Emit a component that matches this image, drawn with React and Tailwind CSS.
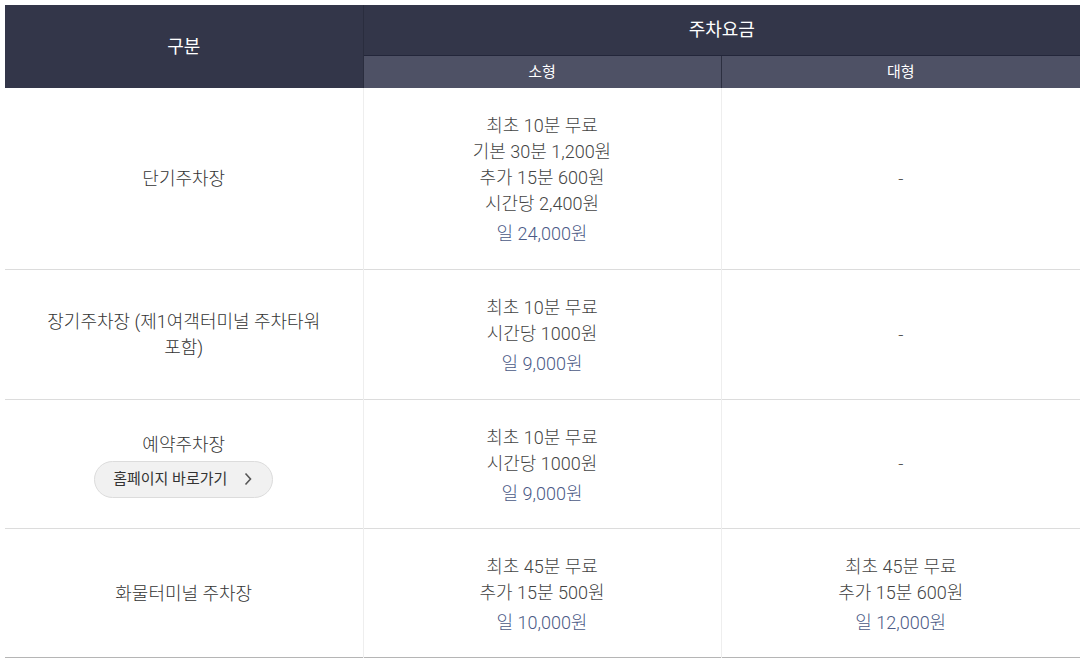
const rows = [
  {
    name: <>단기주차장</>,
    small: ['최초 10분 무료', '기본 30분 1,200원', '추가 15분 600원', '시간당 2,400원'],
    smallDay: '일 24,000원',
    h: 'h-[181px]',
  },
  {
    name: <>장기주차장 (제1여객터미널 주차타워<br />포함)</>,
    small: ['최초 10분 무료', '시간당 1000원'],
    smallDay: '일 9,000원',
    h: 'h-[130px]',
  },
  {
    name: <>예약주차장</>,
    button: true,
    small: ['최초 10분 무료', '시간당 1000원'],
    smallDay: '일 9,000원',
    h: 'h-[129px]',
  },
  {
    name: <>화물터미널 주차장</>,
    small: ['최초 45분 무료', '추가 15분 500원'],
    smallDay: '일 10,000원',
    large: ['최초 45분 무료', '추가 15분 600원'],
    largeDay: '일 12,000원',
    h: 'h-[129px]',
  },
];

const Fee = ({ lines, day }) => {
  if (!lines) return <span className="text-[#555]">-</span>;
  return (
    <div className="flex flex-col items-center pt-[4px]">
      {lines.map((l) => (
        <p key={l} className="leading-[26px] text-[#444]">{l}</p>
      ))}
      <p className="mt-[4px] leading-[26px] text-[#4b5a86]">{day}</p>
    </div>
  );
};

export default function App() {
  return (
    <div className="bg-white min-h-[665px] px-[5px] pt-[5px]" style={{ fontFamily: 'Roboto, "Noto Sans CJK KR", sans-serif' }}>
      <table className="w-[1075px] border-collapse table-fixed text-center text-[18px] font-light">
        <colgroup>
          <col className="w-[358px]" />
          <col className="w-[358px]" />
          <col className="w-[359px]" />
        </colgroup>
        <thead>
          <tr className="h-[50px]">
            <th rowSpan={2} className="bg-[#333649] text-white font-normal text-[18px] border-r border-[#2a2d3e]">구분</th>
            <th colSpan={2} className="bg-[#333649] text-white font-normal text-[18px] border-b border-[#23263a]">주차요금</th>
          </tr>
          <tr className="h-[33px]">
            <th className="bg-[#4e5165] text-white font-normal text-[15px] border-r border-[#2c2f40]">소형</th>
            <th className="bg-[#4e5165] text-white font-normal text-[15px]">대형</th>
          </tr>
        </thead>
        <tbody>
          {rows.map((r, i) => (
            <tr key={i} className={`${r.h} border-b ${i === rows.length - 1 ? 'border-[#b5b5b5]' : 'border-[#dcdcdc]'}`}>
              <td className="border-r border-[#eeeeee] text-[#333] leading-[26px] px-4">
                <div className="flex flex-col items-center pt-[2px]">
                  <span>{r.name}</span>
                  {r.button && (
                    <button className="mt-[3px] flex items-center gap-[16px] h-[37px] pl-[18px] pr-[19px] rounded-full bg-[#f1f1f1] border border-[#dcdcdc] text-[15px] font-normal text-[#333]">
                      홈페이지 바로가기
                      <svg width="10" height="14" viewBox="0 0 10 14" fill="none" stroke="#555" strokeWidth="1.6">
                        <path d="M2.5 1.5 L7.5 7 L2.5 12.5" />
                      </svg>
                    </button>
                  )}
                </div>
              </td>
              <td className="border-r border-[#eeeeee]">
                <Fee lines={r.small} day={r.smallDay} />
              </td>
              <td>
                <Fee lines={r.large} day={r.largeDay} />
              </td>
            </tr>
          ))}
        </tbody>
      </table>
    </div>
  );
}
